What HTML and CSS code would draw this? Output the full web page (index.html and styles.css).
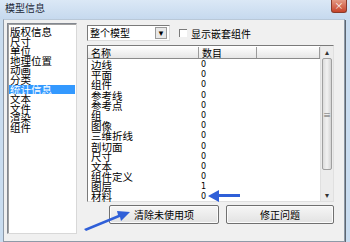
FILE: index.html
```html
<!DOCTYPE html>
<html lang="zh">
<head>
  <meta charset="UTF-8">
  <link rel="stylesheet" href="styles.css">
</head>
<body>
<div class="window">
  <div class="titlebar">
    <span class="title">模型信息</span>
    <span class="close">×</span>
  </div>
  <div class="frame">
    <ul class="sidelist">
      <li>版权信息</li>
      <li>尺寸</li>
      <li>单位</li>
      <li>地理位置</li>
      <li>动画</li>
      <li>分类</li>
      <li class="selected">统计信息</li>
      <li>文本</li>
      <li>文件</li>
      <li>渲染</li>
      <li>组件</li>
    </ul>
    <div class="panel">
      <div class="toolbar">
        <div class="combo">
          <span class="combo-text">整个模型</span>
          <span class="combo-btn">▾</span>
        </div>
        <label class="check"><span class="box"></span>显示嵌套组件</label>
      </div>
      <div class="table">
        <div class="grid">
          <div class="head">
            <span class="c-name">名称</span>
            <span class="c-num">数目</span>
            <span class="c-rest"></span>
          </div>
          <div class="rows">
            <div class="row"><span class="c-name">边线</span><span class="c-num">0</span></div>
            <div class="row"><span class="c-name">平面</span><span class="c-num">0</span></div>
            <div class="row"><span class="c-name">组件</span><span class="c-num">0</span></div>
            <div class="row"><span class="c-name">参考线</span><span class="c-num">0</span></div>
            <div class="row"><span class="c-name">参考点</span><span class="c-num">0</span></div>
            <div class="row"><span class="c-name">组</span><span class="c-num">0</span></div>
            <div class="row"><span class="c-name">图像</span><span class="c-num">0</span></div>
            <div class="row"><span class="c-name">三维折线</span><span class="c-num">0</span></div>
            <div class="row"><span class="c-name">剖切面</span><span class="c-num">0</span></div>
            <div class="row"><span class="c-name">尺寸</span><span class="c-num">0</span></div>
            <div class="row"><span class="c-name">文本</span><span class="c-num">0</span></div>
            <div class="row"><span class="c-name">组件定义</span><span class="c-num">0</span></div>
            <div class="row"><span class="c-name">图层</span><span class="c-num">1</span></div>
            <div class="row"><span class="c-name">材料</span><span class="c-num">0</span></div>
          </div>
        </div>
        <div class="scrollbar">
          <span class="arrow">▴</span>
          <span class="thumb"><span class="grip">≡</span></span>
          <span class="track"></span>
          <span class="arrow">▾</span>
        </div>
      </div>
      <div class="buttons">
        <button class="btn btn-purge">清除未使用项</button>
        <button class="btn btn-fix">修正问题</button>
      </div>
    </div>
  </div>
  <!-- 标注箭头 -->
  <svg class="arrows" width="350" height="242" viewBox="0 0 350 242">
    <path d="M84 229 L118 215 L117 211 L130 212 L121 221 L120 217 L86 231 Z" fill="#2f5fd8"/>
    <path d="M208 196 L219 190 L219 194 L240 194 L240 197 L219 197 L219 202 Z" fill="#2f5fd8"/>
  </svg>
</div>
</body>
</html>
```

FILE: styles.css
```css
body {
  margin: 0;
  font-family: "Noto Sans CJK SC", "DejaVu Sans", sans-serif;
  font-size: 10px;
  color: #000;
}

.window {
  position: relative;
  width: 350px;
  height: 242px;
  background: #c9dcef;
  overflow: hidden;
}

.titlebar {
  height: 19px;
  display: flex;
  align-items: flex-start;
  justify-content: space-between;
  background: linear-gradient(#dbe8f6, #c6d9ee);
  padding-left: 5px;
}

.title {
  font-size: 10px;
  line-height: 16px;
  color: #1e2a3a;
}

.close {
  width: 14px;
  height: 12px;
  margin-right: 3px;
  background: linear-gradient(#e49a84, #c7432a);
  border: 1px solid #8a3a2a;
  border-top: none;
  border-radius: 0 0 3px 3px;
  color: #fff;
  font-size: 9px;
  line-height: 11px;
  text-align: center;
}

.frame {
  display: flex;
  gap: 10px;
  height: 218px;
  margin: 0 5px 0 3px;
  padding: 3px 10px 0 3px;
  background: #f0f0f0;
  border: 1px solid #8e9aa8;
  border-top: 1px solid #b9c8d8;
  box-shadow: 1px 1px 0 #5d6670;
}

.sidelist {
  list-style: none;
  margin: 0;
  padding: 3px 1px;
  width: 66px;
  height: 203px;
  background: #fff;
  border: 1px solid #828790;
  border-right-color: #d8d8d8;
  border-bottom-color: #d8d8d8;
  box-shadow: inset 1px 1px 0 #a0a0a0;
  font-size: 10.5px;
}

.sidelist li {
  height: 9.6px;
  line-height: 9.6px;
  padding-left: 1px;
  white-space: nowrap;
}

.sidelist li.selected {
  background: #3399ff;
  color: #fff;
}

.panel {
  flex: 1;
  display: flex;
  flex-direction: column;
}

.toolbar {
  display: flex;
  align-items: center;
  gap: 9px;
  height: 20px;
  margin-bottom: 2px;
}

.combo {
  display: flex;
  align-items: center;
  justify-content: space-between;
  width: 81px;
  height: 14px;
  background: #fff;
  border: 1px solid #7a7a7a;
  border-right-color: #dcdcdc;
  border-bottom-color: #dcdcdc;
}

.combo-text {
  padding-left: 2px;
  line-height: 14px;
}

.combo-btn {
  width: 10px;
  height: 10px;
  margin-right: 2px;
  background: #e8e8e8;
  border: 1px solid #9a9a9a;
  font-size: 9px;
  line-height: 9px;
  text-align: center;
}

.check {
  display: flex;
  align-items: center;
  gap: 4px;
}

.box {
  width: 7px;
  height: 7px;
  border-left: 1px solid #7a7a7a;
  border-top: 1px solid #7a7a7a;
  background: #fff;
}

.table {
  display: flex;
  height: 155px;
  background: #fff;
  border: 1px solid #7a7a7a;
  border-right-color: #e0e0e0;
  border-bottom-color: #e0e0e0;
}

.grid {
  flex: 1;
  display: flex;
  flex-direction: column;
}

.head {
  display: flex;
  height: 11px;
  line-height: 11px;
  background: linear-gradient(#fdfdfd, #e6e6e6);
  border-bottom: 1px solid #8a8a8a;
  margin-top: 1px;
}

.head span {
  border-right: 1px solid #9a9a9a;
}

.c-name {
  width: 107px;
  padding-left: 3px;
}

.c-num {
  width: 54px;
  padding-left: 3px;
}

.c-rest {
  flex: 1;
}

.rows {
  padding-top: 1px;
  font-size: 10.5px;
}

.row {
  display: flex;
  height: 10.2px;
  line-height: 10.2px;
}

.row .c-num {
  font-family: "DejaVu Sans", sans-serif;
  font-size: 8px;
}

.scrollbar {
  width: 12px;
  display: flex;
  flex-direction: column;
  background: #ececec;
  border-left: 1px solid #e0e0e0;
}

.arrow {
  height: 12px;
  font-size: 8px;
  line-height: 12px;
  text-align: center;
  color: #333;
}

.thumb {
  height: 110px;
  margin: 0 1px;
  background: linear-gradient(90deg, #dcdcdc, #f2f2f2, #d4d4d4);
  border: 1px solid #a0a0a0;
  border-radius: 2px;
  display: flex;
  align-items: center;
  justify-content: center;
}

.grip {
  font-size: 8px;
  color: #666;
}

.track {
  flex: 1;
}

.buttons {
  display: flex;
  justify-content: flex-end;
  gap: 7px;
  margin-top: 3px;
}

.btn {
  width: 110px;
  height: 19px;
  padding: 0;
  font-family: "Noto Sans CJK SC", sans-serif;
  font-size: 10px;
  background: linear-gradient(#f6f6f6, #e2e2e2);
  border: 1px solid #707070;
  border-radius: 2px;
  box-shadow: inset 0 0 0 1px #fbfbfb;
}

.btn-fix {
  width: 108px;
}

.arrows {
  position: absolute;
  left: 0;
  top: 0;
  pointer-events: none;
}
```
